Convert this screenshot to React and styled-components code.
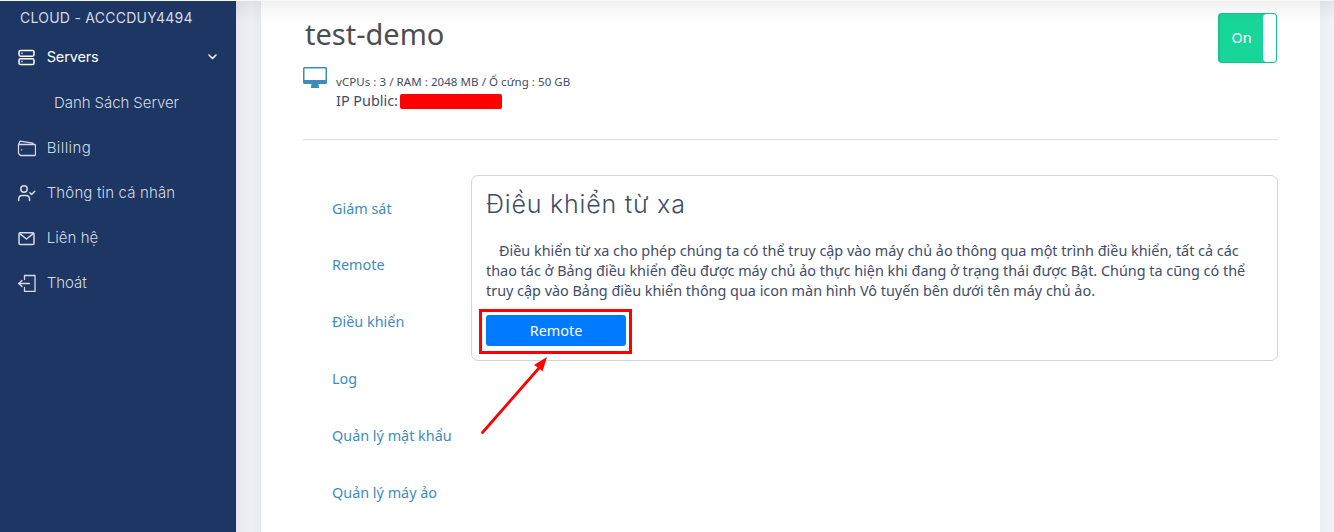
import React from 'react';
import styled, { createGlobalStyle } from 'styled-components';

const Global = createGlobalStyle`
  * { box-sizing: border-box; }
  body { margin: 0; overflow: hidden; background: #eeeff5; }
`;

const ui = '"Noto Sans", "Open Sans", sans-serif';
const display = 'Inter, "Open Sans", sans-serif';

const Page = styled.div`
  position: relative;
  display: flex;
  width: 1334px;
  height: 532px;
  padding-right: 14px;
  overflow: hidden;
  background: linear-gradient(90deg, #e6e7ed 236px, #edeef3 246px, #eeeff5 252px, #e9eaf0 261px, #eceef4 1320px, #f2f3f8 1334px);
  color: #3f4d67;
  font-family: ${ui};
`;

const TopShade = styled.div`
  position: absolute;
  top: 0;
  left: 236px;
  right: 0;
  height: 22px;
  background: linear-gradient(rgba(0, 0, 0, 0.06), rgba(0, 0, 0, 0));
  pointer-events: none;
`;

const TopLine = styled.div`
  position: absolute;
  top: 0;
  left: 0;
  right: 0;
  height: 1px;
  background: #f7f8fa;
`;

const Sidebar = styled.aside`
  flex: 0 0 236px;
  margin-right: 25px;
  background: #1d3664;
  color: #d6dbe3;
  font-family: ${display};
`;

const Account = styled.div`
  height: 34px;
  padding: 1px 0 0 20px;
  font-size: 14px;
  line-height: 34px;
  letter-spacing: ${(p) => p.$ls}px;
  white-space: nowrap;
`;

const MenuItem = styled.div`
  display: flex;
  align-items: center;
  height: 45px;
  padding: ${(p) => (p.$sub ? '0 19px 0 54px' : '0 19px 0 17px')};
  color: ${(p) => (p.$active ? '#ffffff' : 'inherit')};
  font-size: ${(p) => (p.$active ? 14.5 : 15)}px;
  font-weight: ${(p) => (p.$active ? 400 : 300)};

  &:nth-child(2) { height: 46px; }
`;

const MenuLabel = styled.span`
  flex: 1;
  margin-top: ${(p) => (p.$active ? -1 : 0)}px;
  margin-left: ${(p) => (p.$sub ? 0 : 10.7)}px;
  letter-spacing: ${(p) => p.$ls}px;
  white-space: nowrap;
`;

const Icon = styled.svg`
  flex: none;
  display: block;
  fill: none;
  stroke: currentColor;
  stroke-width: ${(p) => p.$weight || 1.5};
  stroke-linecap: round;
  stroke-linejoin: round;
`;

const Card = styled.main`
  flex: 1;
  padding: 13px 42px 0;
  background: #ffffff;
`;

const Header = styled.header`
  display: flex;
  justify-content: space-between;
  height: 127px;
  border-bottom: 1px solid #e2e3e6;
`;

const Title = styled.h1`
  margin: 0 0 0 2px;
  color: #4b4d50;
  font-size: 29px;
  font-weight: 400;
  line-height: 42px;
`;

const Server = styled.div`
  display: flex;
  gap: 9px;
  margin-top: 12px;
`;

const Spec = styled.div`
  margin-top: 6px;
  font-size: 11.5px;
  line-height: 18px;
  letter-spacing: 0.06px;
  white-space: nowrap;
`;

const Address = styled.div`
  display: flex;
  align-items: center;
  gap: 2.5px;
  font-size: 14.4px;
  line-height: 20px;
`;

const Redacted = styled.span`
  width: 102px;
  height: 15px;
  border-radius: 2px;
  background: #ff0000;
`;

const Toggle = styled.div`
  display: flex;
  width: 59px;
  height: 50px;
  margin-right: 1px;
  border: 1px solid #13c68b;
  border-left-width: 2px;
  border-radius: 4px;
  background: #18d59a;
  color: #ffffff;
  font-size: 14.4px;
  line-height: 47px;
`;

const ToggleText = styled.span`
  flex: 1;
  padding-left: 11.5px;
`;

const Handle = styled.span`
  width: 13px;
  border-radius: 4px 3px 3px 4px;
  background: #ffffff;
`;

const Body = styled.div`
  display: flex;
  align-items: flex-start;
  padding-top: 35px;
`;

const Tabs = styled.nav`
  flex: 0 0 168px;
  display: flex;
  flex-direction: column;
  padding: 4.7px 0 0 29px;
`;

const Tab = styled.a`
  height: 56.77px;
  color: #3c8dbc;
  font-size: 14.4px;
  line-height: 57px;
  white-space: nowrap;
`;

const Panel = styled.section`
  flex: 1;
  height: 186px;
  padding: 11px 14px;
  border: 1px solid #d4d4e1;
  border-radius: 7px;
`;

const PanelTitle = styled.h2`
  margin: 0;
  font-family: ${display};
  font-size: 25px;
  font-weight: 300;
  line-height: 34px;
  letter-spacing: 0.8px;
`;

const Copy = styled.p`
  margin: 20px 0 14px;
  font-size: 14.4px;
  line-height: 20px;
`;

const Line = styled.span`
  display: block;
  padding-left: ${(p) => (p.$indent ? 13 : 0)}px;
  white-space: nowrap;
`;

const Anchor = styled.div`
  position: relative;
  width: 140px;
`;

const Button = styled.button`
  display: block;
  width: 140px;
  height: 31px;
  padding: 0;
  border: 0;
  border-radius: 3px;
  background: #007bff;
  color: #ffffff;
  font-family: ${ui};
  font-size: 14.4px;
  line-height: 31px;
`;

const Outline = styled.div`
  position: absolute;
  top: -6px;
  left: -7px;
  width: 153px;
  height: 45px;
  border: 3px solid #ff0000;
`;

const Arrow = styled.svg`
  position: absolute;
  top: 40px;
  left: -8px;
`;

const ServersIcon = () => (
  <Icon width="19" height="18" viewBox="0 0 19 18">
    <rect x="2" y="2.4" width="15" height="5.8" rx="1.6" />
    <rect x="2" y="10.8" width="15" height="5.8" rx="1.6" />
    <path d="M5 5.2h.1M5 13.6h.1" />
  </Icon>
);

const WalletIcon = () => (
  <Icon width="19" height="19" viewBox="0 0 19 19" $weight={1.3}>
    <path d="M1.5 6.5h16a1 1 0 0 1 1 1v9a1 1 0 0 1-1 1H3.5l-2-2V6.500L3 3.200 16 5.200v1.300" />
    <path d="M4.5 11.8h.3" />
  </Icon>
);

const UserIcon = () => (
  <Icon width="19" height="19" viewBox="0 0 19 19">
    <circle cx="7" cy="6" r="3.2" />
    <path d="M1.7 17.5V16a3.6 3.6 0 0 1 3.6-3.5h3.6a3.6 3.6 0 0 1 3.6 3.5v1.500M12.900 9.800l1.700 1.700 3.200-3.200" />
  </Icon>
);

const MailIcon = () => (
  <Icon width="19" height="19" viewBox="0 0 19 19">
    <rect x="2" y="4.7" width="15" height="11.8" rx="1.3" />
    <path d="M2.7 5.6l6.800 5.400 6.800-5.400" />
  </Icon>
);

const ExitIcon = () => (
  <Icon width="19" height="19" viewBox="0 0 19 19" $weight={1.3}>
    <path d="M7.5 6.500v-4h10.500v16H7.500v-4M12.500 10.500h-11M5 7.500l-3.300 3 3.300 3" />
  </Icon>
);

const Chevron = () => (
  <Icon width="9" height="6" viewBox="0 0 9 6">
    <path d="M1 1l3.5 3.5L8 1" />
  </Icon>
);

const Monitor = () => (
  <svg width="24" height="21" viewBox="0 0 24 21" fill="#3c8dbc">
    <path fillRule="evenodd" d="M1.5 0h21A1.5 1.5 0 0 1 24 1.5V15.5a1.5 1.5 0 0 1-1.5 1.5H15.5L16 20v1H8v-1l.5-3H1.5A1.5 1.5 0 0 1 0 15.5V1.5A1.5 1.5 0 0 1 1.5 0zM1.5 1.5V13h21V1.5z" />
  </svg>
);

const menu = [
  { label: 'Servers', icon: ServersIcon, active: true, ls: -0.15 },
  { label: 'Danh Sách Server', sub: true, ls: -0.07 },
  { label: 'Billing', icon: WalletIcon, ls: 0.4 },
  { label: 'Thông tin cá nhân', icon: UserIcon, ls: 0.15 },
  { label: 'Liên hệ', icon: MailIcon, ls: 0.05 },
  { label: 'Thoát', icon: ExitIcon, ls: 0 },
];

const tabs = ['Giám sát', 'Remote', 'Điều khiển', 'Log', 'Quản lý mật khẩu', 'Quản lý máy ảo'];

export default function App() {
  return (
    <Page>
      <Global />
      <Sidebar>
        <Account $ls={0.25}>CLOUD - ACCCDUY4494</Account>
        {menu.map(({ label, icon: Glyph, active, sub, ls }) => (
          <MenuItem key={label} $active={active} $sub={sub}>
            {Glyph && <Glyph />}
            <MenuLabel $sub={sub} $active={active} $ls={ls}>{label}</MenuLabel>
            {active && <Chevron />}
          </MenuItem>
        ))}
      </Sidebar>
      <Card>
        <Header>
          <div>
            <Title>test-demo</Title>
            <Server>
              <Monitor />
              <div>
                <Spec>vCPUs : 3 / RAM : 2048 MB / Ổ cứng : 50 GB</Spec>
                <Address>IP Public: <Redacted /></Address>
              </div>
            </Server>
          </div>
          <Toggle>
            <ToggleText>On</ToggleText>
            <Handle />
          </Toggle>
        </Header>
        <Body>
          <Tabs>
            {tabs.map((label) => <Tab key={label}>{label}</Tab>)}
          </Tabs>
          <Panel>
            <PanelTitle>Điều khiển từ xa</PanelTitle>
            <Copy>
              <Line $indent>Điều khiển từ xa cho phép chúng ta có thể truy cập vào máy chủ ảo thông qua một trình điều khiển, tất cả các</Line>
              <Line>thao tác ở Bảng điều khiển đều được máy chủ ảo thực hiện khi đang ở trạng thái được Bật. Chúng ta cũng có thể</Line>
              <Line>truy cập vào Bảng điều khiển thông qua icon màn hình Vô tuyến bên dưới tên máy chủ ảo.</Line>
            </Copy>
            <Anchor>
              <Button>Remote</Button>
              <Outline />
              <Arrow width="74" height="82" viewBox="0 0 74 82">
                <path d="M4.5 77.5L61 13" stroke="#ff0000" strokeWidth="2.8" strokeLinecap="round" />
                <path d="M69 2L64.500 16.500L61.500 13.500L56 10z" fill="#ff0000" />
              </Arrow>
            </Anchor>
          </Panel>
        </Body>
      </Card>
      <TopShade />
      <TopLine />
    </Page>
  );
}
